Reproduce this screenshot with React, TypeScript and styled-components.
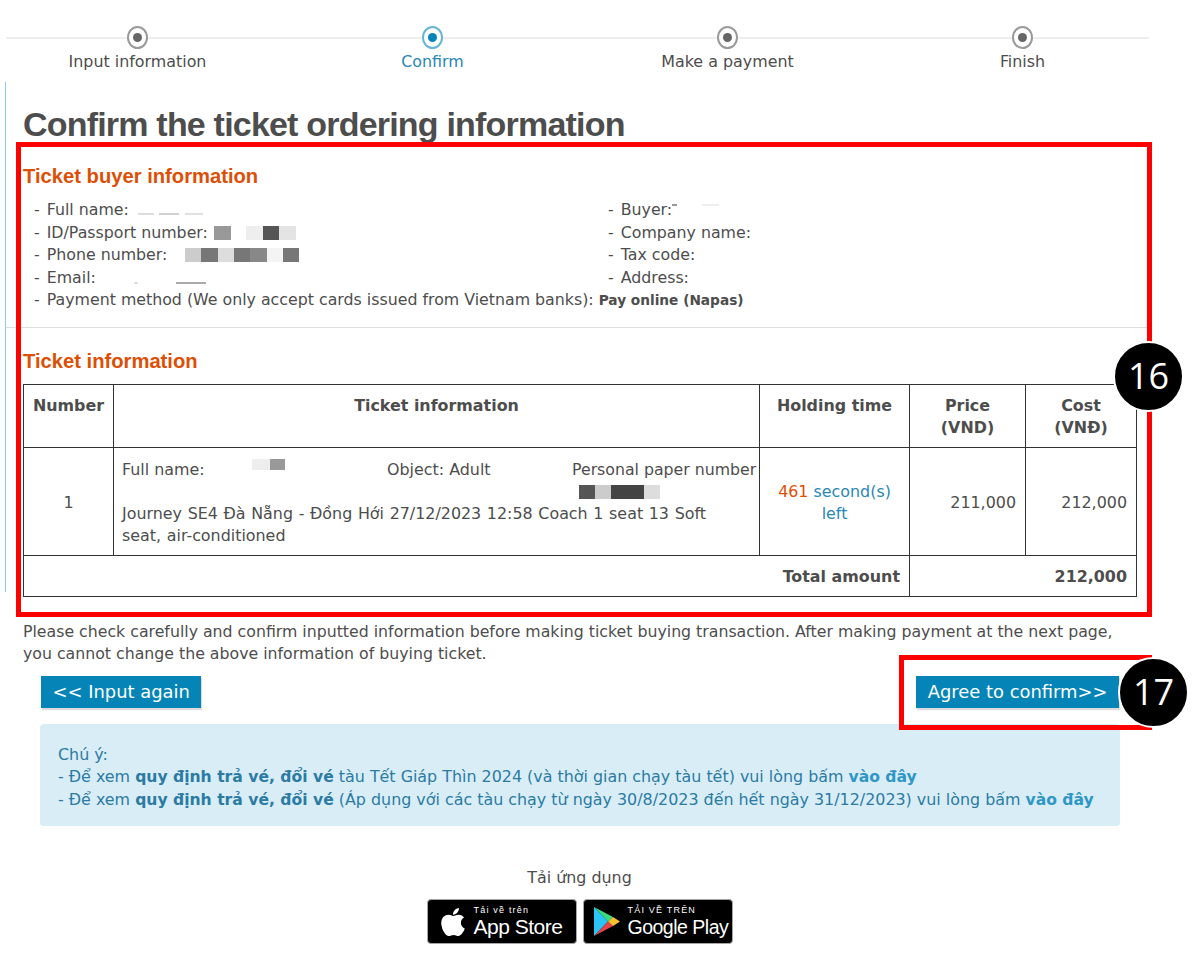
import React from "react";
import styled, { createGlobalStyle } from "styled-components";
import { FaApple } from "react-icons/fa";

const Global = createGlobalStyle`
  html, body { margin: 0; padding: 0; background: #fff; }
  body { font-family: "DejaVu Sans", Verdana, sans-serif; color: #4d4d4d; }
`;

const Page = styled.div`
  position: relative;
  width: 1200px;
  height: 979px;
  overflow: hidden;
  font-size: 15.9px;
  line-height: 22.5px;
`;
const SideRule = styled.div`
  position: absolute;
  left: 5px;
  top: 82px;
  width: 1px;
  height: 510px;
  background: #8fcbe4;
`;
const Stepper = styled.div`
  position: relative;
  display: grid;
  grid-template-columns: repeat(4, 295px);
  margin-left: -10px;
  padding-top: 26px;
  height: 56px;
  &::before {
    content: "";
    position: absolute;
    left: 16px;
    width: 1143px;
    top: 37px;
    height: 2px;
    background: #eeeeee;
  }
`;
const Step = styled.div<{ $active?: boolean }>`
  position: relative;
  display: flex;
  flex-direction: column;
  align-items: center;
  gap: 2px;
  color: ${(p) => (p.$active ? "#2b87b5" : "#4d4d4d")};
`;
const Dot = styled.span<{ $active?: boolean }>`
  box-sizing: border-box;
  width: 21px;
  height: 23px;
  border-radius: 50%;
  background: #fff;
  border: 2px solid ${(p) => (p.$active ? "#66b5d6" : "#9a9a9a")};
  display: flex;
  align-items: center;
  justify-content: center;
  &::after {
    content: "";
    width: 9px;
    height: 9px;
    border-radius: 50%;
    background: ${(p) => (p.$active ? "#0585b7" : "#666")};
  }
`;
const Content = styled.main`
  padding: 21px 64px 0 23px;
`;
const Title = styled.h1`
  margin: 0;
  font-family: "Liberation Sans", Arial, sans-serif;
  font-size: 34px;
  line-height: 42px;
  font-weight: 700;
  letter-spacing: -0.8px;
  color: #4d4d4d;
`;
const SectionTitle = styled.h2<{ $first?: boolean }>`
  margin: ${(p) => (p.$first ? "19px 0 0" : "0")};
  font-family: "Liberation Sans", Arial, sans-serif;
  font-size: 20.2px;
  line-height: 24px;
  font-weight: 700;
  color: #dd4f05;
`;
const InfoGrid = styled.div`
  display: grid;
  grid-template-columns: 574px 1fr;
  margin: 11px 0 0 11px;
  font-size: 15.8px;
`;
const Line = styled.div`
  white-space: nowrap;
  display: flex;
  align-items: center;
`;
const FullLine = styled(Line)`
  grid-column: 1 / -1;
`;
const Dash = styled.span`
  margin-right: 7px;
`;
const Method = styled.strong`
  font-size: 13.7px;
  margin-left: 5px;
`;
const Mosaic = styled.span<{ $left?: number; $drop?: number }>`
  display: inline-flex;
  margin-left: ${(p) => p.$left ?? 0}px;
  margin-top: ${(p) => p.$drop ?? 0}px;
`;
const Tile = styled.span<{ $c: string; $w: number; $h: number }>`
  display: block;
  width: ${(p) => p.$w}px;
  height: ${(p) => p.$h}px;
  background: ${(p) => p.$c};
`;
const Divider = styled.hr`
  border: 0;
  height: 1px;
  background: #dddddd;
  margin: 15px 0 21px -17px;
  width: 1143px;
`;
const Table = styled.table`
  border-collapse: collapse;
  table-layout: fixed;
  width: 1113px;
  margin-top: 11px;
  th, td { border: 1px solid #333; }
  th { vertical-align: top; padding: 10px 8px 0; font-weight: 700; text-align: center; height: 52px; }
  td { padding: 4px 9px 0; }
`;
const NumberCell = styled.td`
  text-align: center;
`;
const TicketCell = styled.td`
  && { padding: 11px 0 7px 8px; vertical-align: top; }
`;
const TicketGrid = styled.div`
  display: grid;
  grid-template-columns: 265px 185px 1fr;
  height: 44px;
  white-space: nowrap;
`;
const Journey = styled.div`
  max-width: 610px;
  word-spacing: 0.6px;
`;
const PaperCol = styled.div`
  display: flex;
  flex-direction: column;
  align-items: flex-start;
  gap: 4px;
  font-size: 15.75px;
`;
const NameCol = styled.div`
  display: flex;
  align-items: flex-start;
`;
const HoldCell = styled.td`
  text-align: center;
  color: #2b87b5;
`;
const Seconds = styled.span`
  color: #dd4f05;
`;
const NumCell = styled.td<{ $bold?: boolean }>`
  text-align: right;
  font-weight: ${(p) => (p.$bold ? 700 : 400)};
`;
const TotalRow = styled.tr`
  height: 41px;
`;
const Note = styled.p`
  margin: 24px 0 0;
  width: 1113px;
  font-size: 15.75px;
`;
const Actions = styled.div`
  display: flex;
  justify-content: space-between;
  margin: 10px 17px 0 18px;
`;
const Btn = styled.button`
  height: 32px;
  padding: 0 11.5px;
  border: 0;
  background: #0585b7;
  color: #fff;
  font: 17.9px "DejaVu Sans", Verdana, sans-serif;
  box-shadow: 1px 2px 1px #dcdcdc;
`;
const Alert = styled.div`
  box-sizing: border-box;
  width: 1080px;
  height: 102px;
  margin: 16px 0 0 17px;
  padding: 20px 18px 0;
  border-radius: 4px;
  background: #d9edf7;
  color: #2b7ba3;
  white-space: nowrap;
  b { font-size: 15.6px; }
`;
const AlertLink = styled.b`
  color: #2f97c6;
`;
const Footer = styled.footer`
  display: flex;
  flex-direction: column;
  align-items: center;
  width: 1113px;
  margin-top: 41px;
`;
const Stores = styled.div`
  display: flex;
  gap: 6px;
  margin-top: 10px;
`;
const Store = styled.div`
  box-sizing: border-box;
  width: 150px;
  height: 45px;
  border-radius: 4px;
  border: 1px solid #a6a6a6;
  background: #000;
  color: #fff;
  display: flex;
  align-items: center;
  font-family: "Liberation Sans", Arial, sans-serif;
  white-space: nowrap;
`;
const StoreText = styled.div<{ $gap: number }>`
  display: flex;
  flex-direction: column;
  margin-left: ${(p) => p.$gap}px;
`;
const StoreSmall = styled.span`
  font-size: 9px;
  line-height: 11px;
  letter-spacing: 1.2px;
`;
const StoreBig = styled.span<{ $small?: boolean }>`
  font-size: ${(p) => (p.$small ? 19.5 : 21)}px;
  line-height: 22px;
  letter-spacing: -0.5px;
`;
const AppleMark = styled(FaApple)`
  font-size: 32px;
  margin-left: 9px;
`;
const PlayMark = styled.svg`
  width: 28px;
  height: 31px;
  margin-left: 9px;
`;
const RedFrame = styled.div<{ $l: number; $t: number; $w: number; $h: number }>`
  position: absolute;
  box-sizing: border-box;
  left: ${(p) => p.$l}px;
  top: ${(p) => p.$t}px;
  width: ${(p) => p.$w}px;
  height: ${(p) => p.$h}px;
  border: 5px solid #ff0000;
  pointer-events: none;
`;
const Badge = styled.div<{ $l: number; $t: number }>`
  position: absolute;
  box-sizing: border-box;
  left: ${(p) => p.$l}px;
  top: ${(p) => p.$t}px;
  width: 71px;
  height: 71px;
  border-radius: 50%;
  background: #000;
  border: 2px solid #fff;
  color: #fff;
  font: 36px/65px "Open Sans", sans-serif;
  text-align: center;
`;

type T = [string, number];
const Tiles = ({ items, h, left, drop }: { items: T[]; h: number; left?: number; drop?: number }) => (
  <Mosaic $left={left} $drop={drop}>
    {items.map(([c, w], i) => (
      <Tile key={i} $c={c} $w={w} $h={h} />
    ))}
  </Mosaic>
);

const steps = ["Input information", "Confirm", "Make a payment", "Finish"];

export default function App() {
  return (
    <Page>
      <Global />
      <SideRule />
      <Stepper>
        {steps.map((s, i) => (
          <Step key={s} $active={i === 1}>
            <Dot $active={i === 1} />
            {s}
          </Step>
        ))}
      </Stepper>
      <Content>
        <Title>Confirm the ticket ordering information</Title>
        <SectionTitle $first>Ticket buyer information</SectionTitle>
        <InfoGrid>
          <Line>
            <Dash>-</Dash>Full name:
            <Tiles left={9} drop={8} h={2} items={[["#dcdcdc", 16], ["#fff", 5], ["#d0d0d0", 20], ["#fff", 6], ["#e0e0e0", 18]]} />
          </Line>
          <Line>
            <Dash>-</Dash>Buyer:
            <Tiles drop={-10} h={2} items={[["#999", 5], ["#fff", 25], ["#eee", 17]]} />
          </Line>
          <Line>
            <Dash>-</Dash>ID/Passport number:
            <Tiles left={6} h={14} items={[["#999", 17], ["#fff", 15], ["#eee", 17], ["#555", 16], ["#e4e4e4", 17]]} />
          </Line>
          <Line><Dash>-</Dash>Company name:</Line>
          <Line>
            <Dash>-</Dash>Phone number:
            <Tiles left={18} h={14} items={[["#ccc", 16], ["#777", 17], ["#ddd", 16], ["#777", 16], ["#888", 17], ["#f4f4f4", 16], ["#777", 16]]} />
          </Line>
          <Line><Dash>-</Dash>Tax code:</Line>
          <Line>
            <Dash>-</Dash>Email:
            <Tiles left={38} drop={10} h={2} items={[["#ddd", 4], ["#fff", 38], ["#aaa", 30]]} />
          </Line>
          <Line><Dash>-</Dash>Address:</Line>
          <FullLine>
            <Dash>-</Dash>Payment method (We only accept cards issued from Vietnam banks):
            <Method>Pay online (Napas)</Method>
          </FullLine>
        </InfoGrid>
        <Divider />
        <SectionTitle>Ticket information</SectionTitle>
        <Table>
          <colgroup>
            <col width="90" />
            <col width="646" />
            <col width="150" />
            <col width="116" />
            <col width="111" />
          </colgroup>
          <thead>
            <tr>
              <th>Number</th>
              <th>Ticket information</th>
              <th>Holding time</th>
              <th>Price (VND)</th>
              <th>Cost (VNĐ)</th>
            </tr>
          </thead>
          <tbody>
            <tr>
              <NumberCell>1</NumberCell>
              <TicketCell>
                <TicketGrid>
                  <NameCol>
                    Full name:
                    <Tiles left={47} h={11} items={[["#eee", 18], ["#999", 15]]} />
                  </NameCol>
                  <div>Object: Adult</div>
                  <PaperCol>
                    Personal paper number
                    <Tiles left={7} h={14} items={[["#555", 16], ["#ccc", 16], ["#444", 33], ["#ddd", 16]]} />
                  </PaperCol>
                </TicketGrid>
                <Journey>Journey SE4 Đà Nẵng - Đồng Hới 27/12/2023 12:58 Coach 1 seat 13 Soft seat, air-conditioned</Journey>
              </TicketCell>
              <HoldCell>
                <Seconds>461</Seconds> second(s) left
              </HoldCell>
              <NumCell>211,000</NumCell>
              <NumCell>212,000</NumCell>
            </tr>
            <TotalRow>
              <NumCell $bold colSpan={3}>Total amount</NumCell>
              <NumCell $bold colSpan={2}>212,000</NumCell>
            </TotalRow>
          </tbody>
        </Table>
        <Note>
          Please check carefully and confirm inputted information before making ticket buying transaction. After making payment at the next page, you cannot change the above information of buying ticket.
        </Note>
        <Actions>
          <Btn>&lt;&lt; Input again</Btn>
          <Btn>Agree to confirm&gt;&gt;</Btn>
        </Actions>
        <Alert>
          Chú ý:
          <br />
          - Để xem <b>quy định trả vé, đổi vé</b> tàu Tết Giáp Thìn 2024 (và thời gian chạy tàu tết) vui lòng bấm <AlertLink>vào đây</AlertLink>
          <br />
          - Để xem <b>quy định trả vé, đổi vé</b> (Áp dụng với các tàu chạy từ ngày 30/8/2023 đến hết ngày 31/12/2023) vui lòng bấm <AlertLink>vào đây</AlertLink>
        </Alert>
        <Footer>
          Tải ứng dụng
          <Stores>
            <Store>
              <AppleMark />
              <StoreText $gap={5}>
                <StoreSmall>Tải về trên</StoreSmall>
                <StoreBig>App Store</StoreBig>
              </StoreText>
            </Store>
            <Store>
              <PlayMark viewBox="0 0 28 31">
                <path d="M1 1 L15 15.5 L1 30 Z" fill="#29c5f6" />
                <path d="M1 1 L20 11 L15 15.5 Z" fill="#3ddc84" />
                <path d="M1 30 L20 20 L15 15.5 Z" fill="#e8434b" />
                <path d="M20 11 L27 15.5 L20 20 L15 15.5 Z" fill="#fbc02d" />
              </PlayMark>
              <StoreText $gap={7}>
                <StoreSmall>TẢI VỀ TRÊN</StoreSmall>
                <StoreBig $small>Google Play</StoreBig>
              </StoreText>
            </Store>
          </Stores>
        </Footer>
      </Content>
      <RedFrame $l={16} $t={142} $w={1136} $h={475} />
      <RedFrame $l={899} $t={655} $w={253} $h={75} />
      <Badge $l={1113} $t={341}>16</Badge>
      <Badge $l={1118} $t={657}>17</Badge>
    </Page>
  );
}
